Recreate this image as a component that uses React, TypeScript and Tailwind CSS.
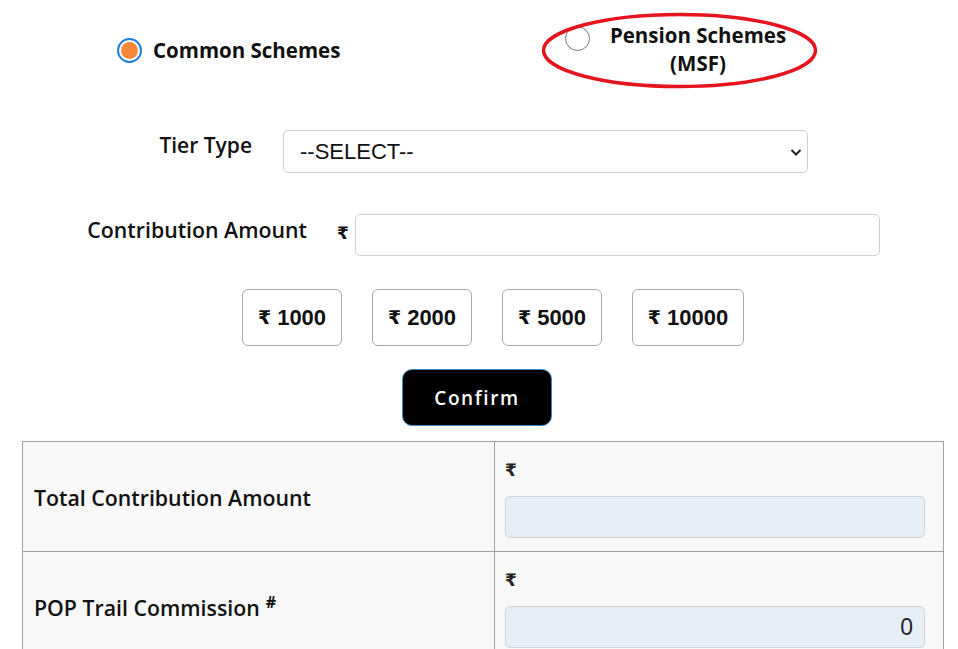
import React from 'react';

const sans = "font-['Open_Sans','DejaVu_Sans',sans-serif]";
const arial = "font-['Liberation_Sans','DejaVu_Sans',sans-serif]";

function Rupee({ className = '' }: { className?: string }) {
  return <span className={`font-['DejaVu_Sans','Open_Sans',sans-serif] font-bold ${className}`}>₹</span>;
}

export default function App() {
  const amounts = ['1000', '2000', '5000', '10000'];

  return (
    <div className={`w-[958px] h-[649px] overflow-hidden bg-white text-[#111] ${sans}`}>
      {/* scheme choice */}
      <div className="relative flex items-start pt-[21px]">
        <label className="ml-[117px] mt-[15px] flex w-[448px] shrink-0 items-center gap-[11px]">
          <span className="flex h-[25px] w-[25px] items-center justify-center rounded-full border-2 border-[#1e7fd8] bg-white">
            <span className="h-[17px] w-[17px] rounded-full bg-[#f5883a]" />
          </span>
          <span className="text-[20.5px] font-bold leading-[28px]">Common Schemes</span>
        </label>
        <label className="flex items-start">
          <span className="mt-[5px] h-[25px] w-[25px] rounded-full border-[1.5px] border-[#777] bg-white" />
          <span className="ml-[10px] w-[196px] text-center text-[20.5px] font-bold leading-[28px]">
            Pension Schemes
            <br />
            (MSF)
          </span>
        </label>
        <svg className="absolute left-[541px] top-[12px]" width="277" height="77" viewBox="0 0 277 77">
          <ellipse cx="138.5" cy="38.5" rx="136" ry="36" fill="none" stroke="#e5141f" strokeWidth="3.5" />
        </svg>
      </div>

      {/* tier type */}
      <div className="mt-[53px] flex items-start">
        <div className="mt-[1px] w-[252px] text-right text-[21px] font-semibold leading-[28px]">Tier Type</div>
        <div className="relative ml-[31px] w-[525px]">
          <select
            className={`h-[43px] w-full appearance-none rounded-[5px] border border-[#cfcfcf] bg-white pl-[16px] text-[22px] text-[#111] outline-none ${arial}`}
            defaultValue=""
          >
            <option value="">--SELECT--</option>
          </select>
          <svg className="pointer-events-none absolute right-[6px] top-[18px]" width="12" height="9" viewBox="0 0 12 9">
            <path d="M1.5 2 L6 6.5 L10.5 2" fill="none" stroke="#222" strokeWidth="2" />
          </svg>
        </div>
      </div>

      {/* contribution amount */}
      <div className="mt-[41px] flex items-start">
        <div className="mt-[2px] w-[307px] text-right text-[21.3px] font-semibold leading-[28px]">Contribution Amount</div>
        <Rupee className="ml-[30px] mt-[9px] text-[17px] leading-[20px]" />
        <input className="ml-[6px] h-[42px] w-[525px] rounded-[5px] border border-[#cfcfcf] bg-white outline-none" />
      </div>

      {/* quick amounts */}
      <div className="mt-[33px] ml-[242px] flex gap-[30px]">
        {amounts.map((a) => (
          <button
            key={a}
            className={`flex h-[57px] items-center justify-center rounded-[6px] border border-[#a9a9a9] bg-white text-[22px] font-bold ${arial} ${a === '10000' ? 'w-[112px]' : 'w-[100px]'}`}
          >
            <span className="font-['DejaVu_Sans',sans-serif] text-[19px]">₹</span>
            <span className="ml-[6px]">{a}</span>
          </button>
        ))}
      </div>

      {/* confirm */}
      <button className="mt-[23px] ml-[402px] block h-[57px] w-[150px] rounded-[10px] border border-[#3a8ccf] bg-black pt-[2px] text-[19px] font-semibold tracking-[1.6px] text-white">
        Confirm
      </button>

      {/* totals table */}
      <table className="mt-[15px] ml-[22px] w-[922px] border-collapse bg-[#f8f8f8]">
        <tbody>
          {[
            { label: 'Total Contribution Amount', value: '', sup: false },
            { label: 'POP Trail Commission', value: '0', sup: true },
          ].map((r) => (
            <tr key={r.label}>
              <td className="w-[472px] border border-[#a3a3a3] pl-[11px] pt-[2px] align-middle text-[21.3px] font-semibold">
                {r.label}
                {r.sup && <sup className="ml-[6px] text-[16px] font-bold">#</sup>}
              </td>
              <td className="border border-[#a3a3a3] pl-[10px] pr-[18px] pt-[18px] pb-[13px] align-top">
                <Rupee className="block text-[17px] leading-[20px] text-[#222]" />
                <input
                  readOnly
                  value={r.value}
                  className={`mt-[16px] block h-[42px] w-[420px] rounded-[5px] border border-[#cfd4da] bg-[#e8eef5] pr-[11px] text-right text-[23px] text-[#212529] outline-none ${arial}`}
                />
              </td>
            </tr>
          ))}
        </tbody>
      </table>
    </div>
  );
}
